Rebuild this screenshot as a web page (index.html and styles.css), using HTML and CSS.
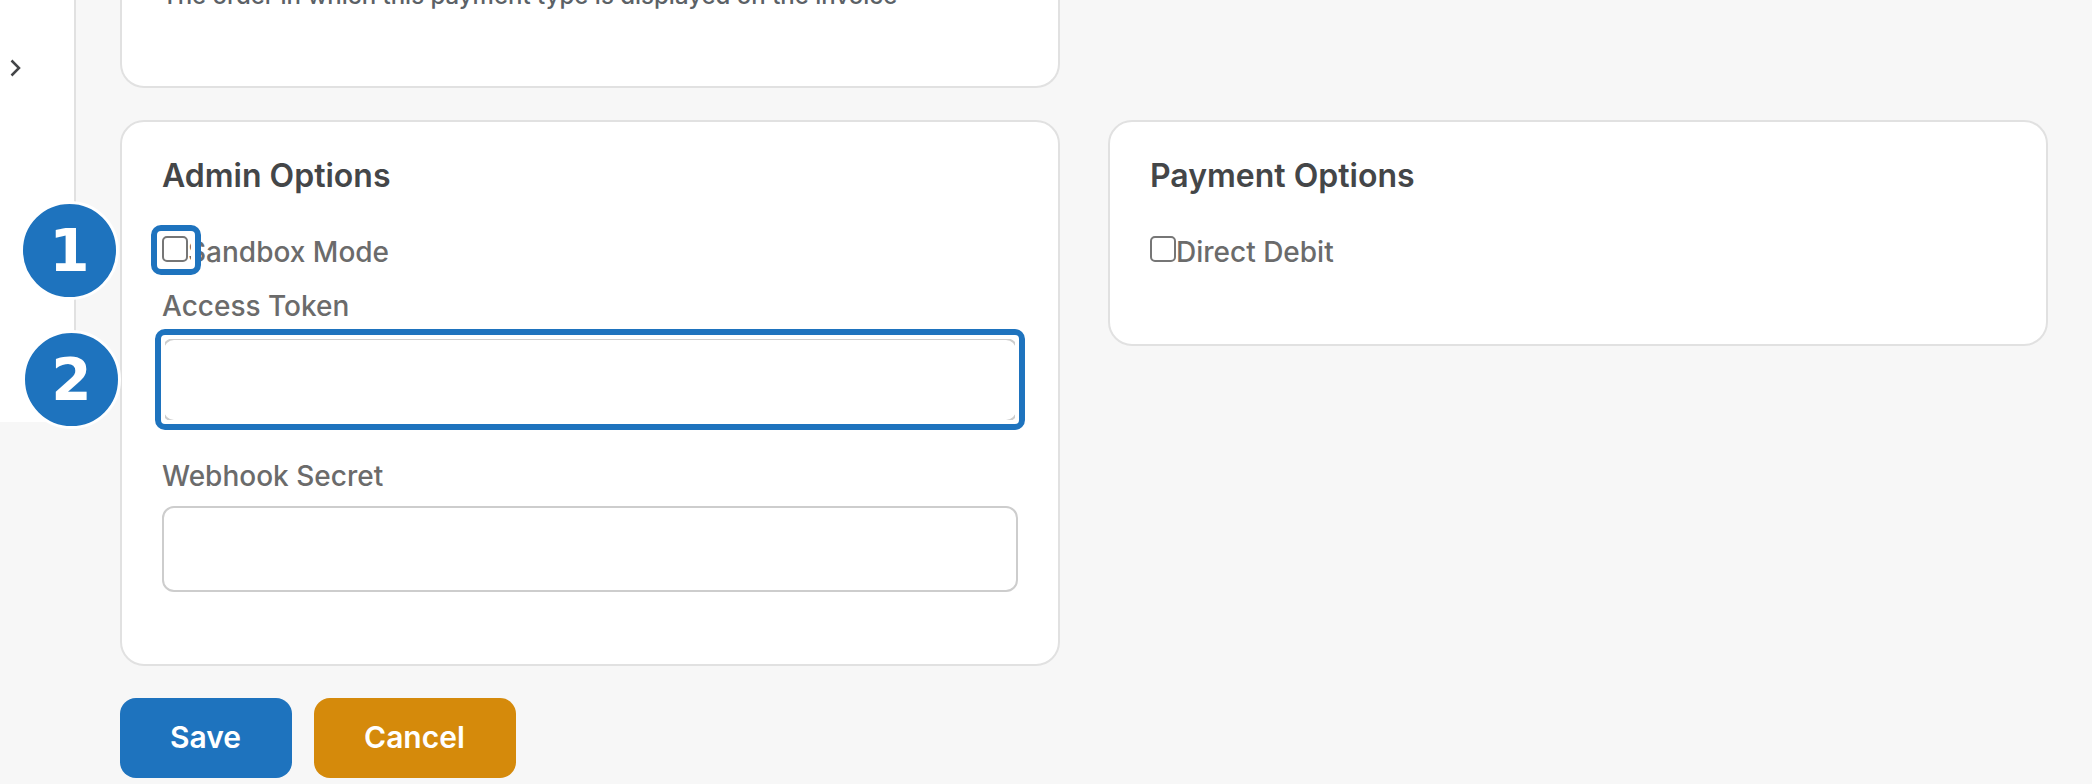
FILE: index.html
```html
<!DOCTYPE html>
<html lang="en">
<head>
<meta charset="utf-8">
<title>Payment Type Settings</title>
<link rel="stylesheet" href="styles.css">
</head>
<body>
<div class="page">
  <aside class="sidebar">
    <button class="expand" type="button" aria-label="Expand menu">
      <svg class="chevron" viewBox="0 0 12 20" aria-hidden="true"><path d="M1.500 2.500L9 10l-7.500 7.500"/></svg>
    </button>
  </aside>
  <main class="main">
    <form class="form">
      <div class="grid">
        <section class="card card-tail">
          <p class="hint">The order in which this payment type is displayed on the invoice</p>
        </section>
        <section class="card card-start">
          <h2 class="title">Admin Options</h2>
          <div class="check-row">
            <input class="check" type="checkbox" id="sandbox">
            <label class="label" for="sandbox">Sandbox Mode</label>
            <span class="ring ring-check"></span>
            <span class="badge badge-check">1</span>
          </div>
          <div class="field">
            <label class="label" for="token">Access Token</label>
            <div class="marked">
              <input class="input input-marked" type="text" id="token">
              <span class="ring ring-input"></span>
              <span class="badge badge-input">2</span>
            </div>
          </div>
          <div class="field">
            <label class="label" for="secret">Webhook Secret</label>
            <input class="input" type="text" id="secret">
          </div>
        </section>
        <section class="card">
          <h2 class="title">Payment Options</h2>
          <div class="check-row">
            <input class="check" type="checkbox" id="debit">
            <label class="label" for="debit">Direct Debit</label>
          </div>
        </section>
      </div>
      <div class="actions">
        <button class="button button-save" type="submit">Save</button>
        <button class="button button-cancel" type="button">Cancel</button>
      </div>
    </form>
  </main>
</div>
</body>
</html>
```
FILE: styles.css
```css
* {
  box-sizing: border-box;
}

body {
  margin: 0;
  overflow: hidden;
  background: #f7f7f7;
  color: #6b6b6b;
  font-family: Inter, "Liberation Sans", sans-serif;
}

.page {
  display: flex;
  align-items: flex-start;
}

.sidebar {
  width: 76px;
  flex: none;
  padding: 54px 0 340px 6px;
  background: #fff;
  border-right: 2px solid #e1e1e1;
}

.expand {
  display: flex;
  padding: 4px;
  border: 0;
  background: none;
}

.chevron {
  width: 12px;
  height: 20px;
  fill: none;
  stroke: #444648;
  stroke-width: 2.5;
}

.main {
  flex: 1;
  min-width: 0;
  padding: 0 44px 6px;
}

.grid {
  display: grid;
  grid-template-columns: 1fr 1fr;
  gap: 32px 48px;
  align-items: start;
}

.card {
  padding: 34px 40px 72px;
  background: #fff;
  border: 2px solid #e1e1e1;
  border-radius: 24px;
}

.card-tail {
  padding-top: 0;
  border-top: 0;
  border-top-left-radius: 0;
  border-top-right-radius: 0;
}

.card-start {
  grid-column: 1;
}

.hint {
  margin: -18px 0 4px;
  color: #5b6166;
  font-size: 24px;
  font-weight: 500;
  line-height: 28px;
}

.title {
  margin: 0 0 36px;
  color: #444648;
  font-size: 32px;
  font-weight: 600;
  line-height: 40px;
}

.check-row {
  position: relative;
  display: flex;
  margin-bottom: 14px;
}

.check-row:last-child {
  margin-bottom: 0;
}

.check {
  width: 26px;
  height: 26px;
  margin: 4px 0 0;
  appearance: none;
  background: #fff;
  border: 2px solid #767676;
  border-radius: 5px;
}

.check:checked {
  background: #1e73be;
}

.label {
  display: block;
  font-size: 28px;
  font-weight: 500;
  line-height: 40px;
}

.field + .field {
  margin-top: 34px;
}

.input {
  display: block;
  width: 100%;
  height: 86px;
  margin-top: 10px;
  padding: 0 24px;
  background: #fff;
  border: 2px solid #cdcdcd;
  border-radius: 12px;
  font: inherit;
  font-size: 28px;
}

.input-marked {
  height: 84px;
  margin-top: 0;
}

.marked {
  position: relative;
  margin-top: 12px;
}

.ring {
  position: absolute;
  border: 6px solid #1e73be;
  border-radius: 10px;
  box-shadow: inset 0 0 0 4px #fff;
  pointer-events: none;
}

.ring-check {
  top: -7px;
  left: -11px;
  width: 50px;
  height: 50px;
}

.ring-input {
  inset: -9px -7px -8px;
}

.badge {
  position: absolute;
  display: flex;
  align-items: center;
  justify-content: center;
  width: 99px;
  height: 99px;
  background: #1e73be;
  border: 3px solid #fff;
  border-radius: 50%;
  color: #fff;
  font-family: "DejaVu Sans", sans-serif;
  font-size: 58px;
  font-weight: 700;
  line-height: 58px;
}

.badge-check {
  top: -31px;
  left: -142px;
}

.badge-input {
  top: -8px;
  left: -140px;
}

.actions {
  display: flex;
  gap: 22px;
  margin-top: 32px;
}

.button {
  height: 80px;
  padding: 0 51px 2px 50px;
  border: 0;
  border-radius: 16px;
  color: #fff;
  font-family: inherit;
  font-size: 30px;
  font-weight: 600;
}

.button-save {
  background: #1e73be;
}

.button-cancel {
  background: #d58a0b;
}
```
